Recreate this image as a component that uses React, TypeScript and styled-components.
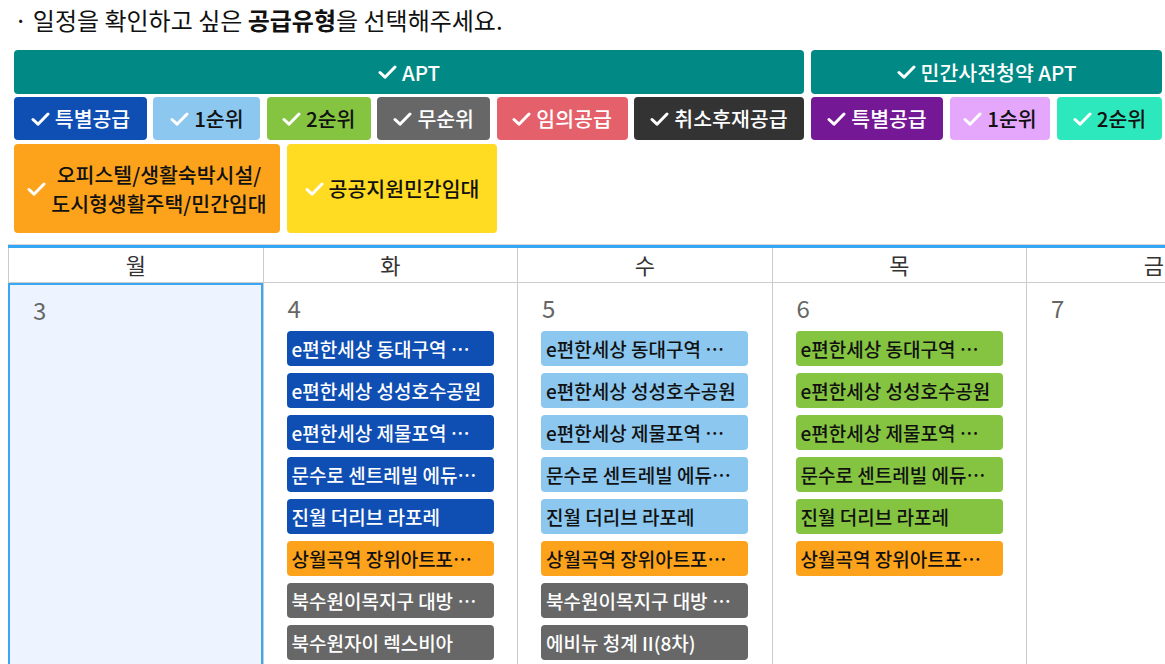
import React from 'react'
import styled, { createGlobalStyle } from 'styled-components'

const GlobalStyle = createGlobalStyle`
  body {
    margin: 5px 0 0 8px;
    font-family: "Noto Sans CJK KR", "Noto Sans", sans-serif;
    color: #111;
    background: #fff;
  }
`

const Page = styled.div`
  width: 1157px;
  height: 659px;
  display: flex;
  flex-direction: column;
`

const Guide = styled.p`
  margin: 0;
  padding-left: 6px;
  font-size: 24px;
  line-height: 30px;
  color: #111;

  b {
    font-weight: 700;
  }
`

const Filters = styled.div`
  margin-top: 15px;
  padding: 0 6px;
  display: flex;
  flex-direction: column;
  gap: 4px;
`

const Groups = styled.div`
  display: grid;
  grid-template-columns: 790px 351px;
  gap: 7px;
`

const Group = styled.div`
  display: flex;
  flex-direction: column;
  gap: 3px;
`

const SubRow = styled.div<{ $gap: number }>`
  display: flex;
  gap: ${(p) => p.$gap}px;
`

const Chip = styled.button<{ $bg: string; $fg: string; $w?: number; $h: number }>`
  display: flex;
  align-items: center;
  justify-content: center;
  gap: 5px;
  box-sizing: border-box;
  height: ${(p) => p.$h}px;
  ${(p) => (p.$w ? `width: ${p.$w}px; flex: none;` : 'flex: 1 1 auto;')}
  padding: 0 6px;
  border: none;
  border-radius: 4px;
  background: ${(p) => p.$bg};
  color: ${(p) => p.$fg};
  font-family: inherit;
  font-size: 20.5px;
  font-weight: 500;
  line-height: 29px;
  text-align: center;
  cursor: pointer;

  svg {
    flex: none;
  }
`

const ChipLabel = styled.span`
  white-space: pre-line;
`

const Check = () => (
  <svg width="19" height="16" viewBox="0 0 19 16">
    <path d="M2 8.5 L7 13.2 L17 3" fill="none" stroke="#fff" strokeWidth="3" strokeLinecap="round" strokeLinejoin="round" />
  </svg>
)

const Calendar = styled.div`
  margin-top: 11px;
  flex: 1;
  min-height: 0;
  border-top: 1px solid #d6d6d6;
  overflow: hidden;
`

const Grid = styled.div`
  display: grid;
  grid-template-columns: repeat(5, 254.5px);
  width: 1273px;
  border-top: 3px solid #34a6f4;
`

const DayHead = styled.div`
  height: 34px;
  border-left: 1px solid #cccccc;
  border-bottom: 1px solid #cccccc;
  text-align: center;
  font-size: 22px;
  line-height: 32px;
  color: #333;
`

const Cell = styled.div<{ $today?: boolean }>`
  box-sizing: border-box;
  height: 400px;
  padding: 9px 23px 0 ${(p) => (p.$today ? 22 : 23)}px;
  border-left: 1px solid #cccccc;
  ${(p) =>
    p.$today &&
    `
    background: #edf4ff;
    border: 2px solid #3aa7f3;
  `}
`

const DateNum = styled.div`
  font-size: 24px;
  line-height: 32px;
  color: #666;
  padding-left: 1px;
  margin-bottom: 7px;
`

const Events = styled.div`
  display: flex;
  flex-direction: column;
  gap: 7px;
`

const Event = styled.div<{ $bg: string; $fg: string }>`
  height: 35px;
  width: 207px;
  box-sizing: border-box;
  padding: 0 11px 0 5px;
  border-radius: 4px;
  background: ${(p) => p.$bg};
  color: ${(p) => p.$fg};
  font-size: 19px;
  font-weight: 500;
  line-height: 35px;
  white-space: nowrap;
  overflow: hidden;
  text-overflow: ellipsis;
`

const C = {
  special: ['#0f4fb4', '#fff'],
  first: ['#8bc7ef', '#111'],
  second: ['#85c440', '#111'],
  none: ['#676767', '#fff'],
  random: ['#e4606a', '#fff'],
  cancel: ['#333333', '#fff'],
  pSpecial: ['#741896', '#fff'],
  pFirst: ['#e5a7fb', '#111'],
  pSecond: ['#2ee8bd', '#111'],
  office: ['#fca31b', '#111'],
  public: ['#ffdb22', '#111'],
}

const aptSubs = [
  { label: '특별공급', c: C.special, w: 133 },
  { label: '1순위', c: C.first, w: 107 },
  { label: '2순위', c: C.second, w: 104 },
  { label: '무순위', c: C.none, w: 113 },
  { label: '임의공급', c: C.random, w: 131 },
  { label: '취소후재공급', c: C.cancel, w: 170 },
]

const preSubs = [
  { label: '특별공급', c: C.pSpecial, w: 132 },
  { label: '1순위', c: C.pFirst, w: 100 },
  { label: '2순위', c: C.pSecond, w: 105 },
]

const baseList = [
  'e편한세상 동대구역 센텀스퀘어',
  'e편한세상 성성호수공원',
  'e편한세상 제물포역 파크레인',
  '문수로 센트레빌 에듀파크',
  '진월 더리브 라포레',
]

const sangwol = '상월곡역 장위아트포레 주상복합'

const days = [
  { name: '월', date: 3, today: true, events: [] as { t: string; c: string[] }[] },
  {
    name: '화',
    date: 4,
    events: [
      ...baseList.map((t) => ({ t, c: C.special })),
      { t: sangwol, c: C.office },
      { t: '북수원이목지구 대방 디에트르', c: C.none },
      { t: '북수원자이 렉스비아', c: C.none },
    ],
  },
  {
    name: '수',
    date: 5,
    events: [
      ...baseList.map((t) => ({ t, c: C.first })),
      { t: sangwol, c: C.office },
      { t: '북수원이목지구 대방 디에트르', c: C.none },
      { t: '에비뉴 청계 II(8차)', c: C.none },
    ],
  },
  {
    name: '목',
    date: 6,
    events: [
      ...baseList.map((t) => ({ t, c: C.second })),
      { t: sangwol, c: C.office },
    ],
  },
  { name: '금', date: 7, events: [] },
]

export default function App() {
  return (
    <Page>
      <GlobalStyle />
      <Guide>
        · 일정을 확인하고 싶은 <b>공급유형</b>을 선택해주세요.
      </Guide>

      <Filters>
        <Groups>
          <Group>
            <Chip $bg="#008985" $fg="#fff" $h={44}>
              <Check />
              <ChipLabel>APT</ChipLabel>
            </Chip>
            <SubRow $gap={6.4}>
              {aptSubs.map((s) => (
                <Chip key={s.label} $bg={s.c[0]} $fg={s.c[1]} $w={s.w} $h={43}>
                  <Check />
                  <ChipLabel>{s.label}</ChipLabel>
                </Chip>
              ))}
            </SubRow>
          </Group>
          <Group>
            <Chip $bg="#008985" $fg="#fff" $h={44}>
              <Check />
              <ChipLabel>민간사전청약 APT</ChipLabel>
            </Chip>
            <SubRow $gap={7}>
              {preSubs.map((s) => (
                <Chip key={s.label} $bg={s.c[0]} $fg={s.c[1]} $w={s.w} $h={43}>
                  <Check />
                  <ChipLabel>{s.label}</ChipLabel>
                </Chip>
              ))}
            </SubRow>
          </Group>
        </Groups>
        <SubRow $gap={7}>
          <Chip $bg={C.office[0]} $fg={C.office[1]} $w={266} $h={89}>
            <Check />
            <ChipLabel>{'오피스텔/생활숙박시설/\n도시형생활주택/민간임대'}</ChipLabel>
          </Chip>
          <Chip $bg={C.public[0]} $fg={C.public[1]} $w={210} $h={89}>
            <Check />
            <ChipLabel>공공지원민간임대</ChipLabel>
          </Chip>
        </SubRow>
      </Filters>

      <Calendar>
        <Grid>
          {days.map((d) => (
            <DayHead key={d.name}>{d.name}</DayHead>
          ))}
          {days.map((d) => (
            <Cell key={d.date} $today={d.today}>
              <DateNum>{d.date}</DateNum>
              <Events>
                {d.events.map((e, i) => (
                  <Event key={i} $bg={e.c[0]} $fg={e.c[1]}>
                    {e.t}
                  </Event>
                ))}
              </Events>
            </Cell>
          ))}
        </Grid>
      </Calendar>
    </Page>
  )
}
